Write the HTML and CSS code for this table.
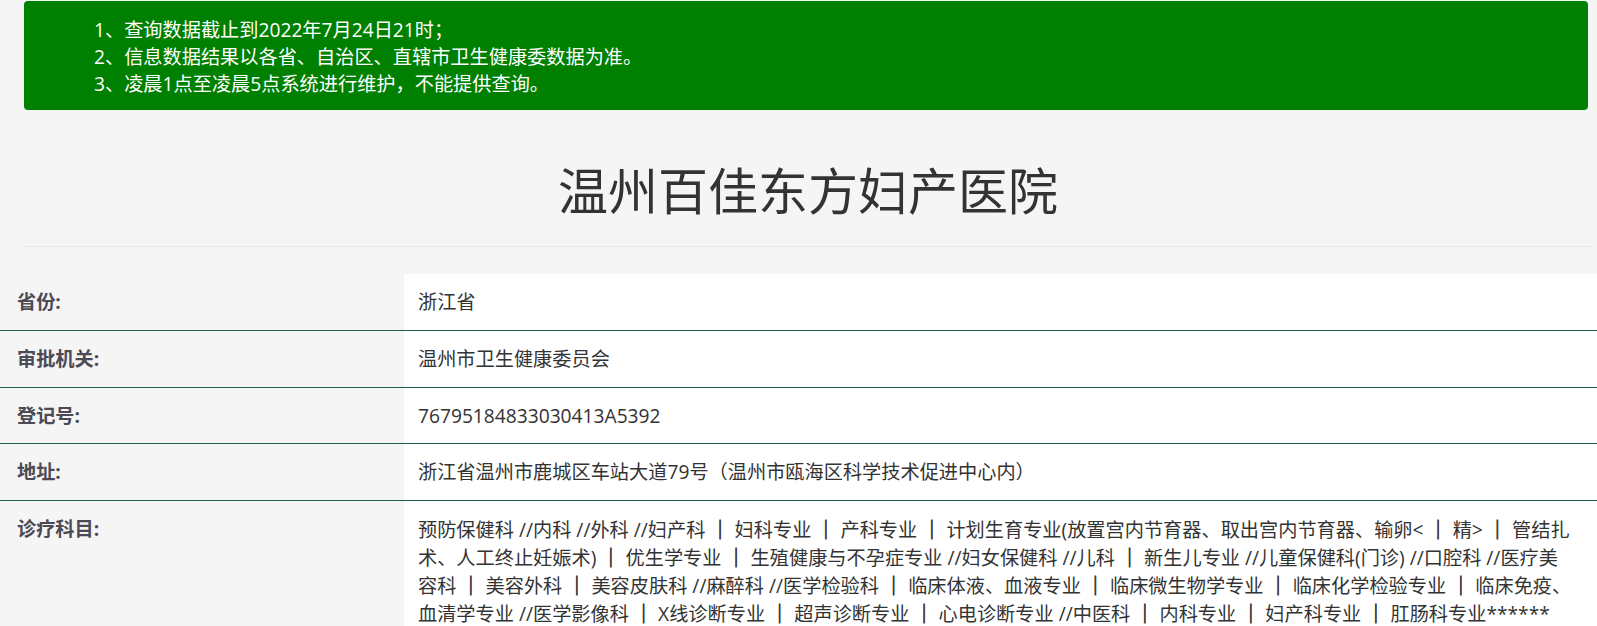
FILE: index.html
```html
<!DOCTYPE html>
<html lang="zh-CN">
<head>
<meta charset="utf-8">
<title>温州百佳东方妇产医院</title>
<link rel="stylesheet" href="styles.css">
</head>
<body>
<div class="top">
  <div class="notice">
    <p>1、查询数据截止到2022年7月24日21时；</p>
    <p>2、信息数据结果以各省、自治区、直辖市卫生健康委数据为准。</p>
    <p>3、凌晨1点至凌晨5点系统进行维护，不能提供查询。</p>
  </div>
  <h1 class="title">温州百佳东方妇产医院</h1>
</div>
<table class="info">
  <tr><th>省份:</th><td>浙江省</td></tr>
  <tr><th>审批机关:</th><td>温州市卫生健康委员会</td></tr>
  <tr><th>登记号:</th><td>76795184833030413A5392</td></tr>
  <tr><th>地址:</th><td>浙江省温州市鹿城区车站大道79号（温州市瓯海区科学技术促进中心内）</td></tr>
  <tr><th>诊疗科目:</th><td class="subjects">预防保健科 //内科 //外科 //妇产科 <span class="sep">｜</span> 妇科专业 <span class="sep">｜</span> 产科专业 <span class="sep">｜</span> 计划生育专业(放置宫内节育器、取出宫内节育器、输卵&lt; <span class="sep">｜</span> 精&gt; <span class="sep">｜</span> 管结扎<br>术、人工终止妊娠术) <span class="sep">｜</span> 优生学专业 <span class="sep">｜</span> 生殖健康与不孕症专业 //妇女保健科 //儿科 <span class="sep">｜</span> 新生儿专业 //儿童保健科(门诊) //口腔科 //医疗美<br>容科 <span class="sep">｜</span> 美容外科 <span class="sep">｜</span> 美容皮肤科 //麻醉科 //医学检验科 <span class="sep">｜</span> 临床体液、血液专业 <span class="sep">｜</span> 临床微生物学专业 <span class="sep">｜</span> 临床化学检验专业 <span class="sep">｜</span> 临床免疫、<br>血清学专业 //医学影像科 <span class="sep">｜</span> X线诊断专业 <span class="sep">｜</span> 超声诊断专业 <span class="sep">｜</span> 心电诊断专业 //中医科 <span class="sep">｜</span> 内科专业 <span class="sep">｜</span> 妇产科专业 <span class="sep">｜</span> 肛肠科专业******</td></tr>
</table>
</body>
</html>
```

FILE: styles.css
```css
body {
  margin: 0;
  background: #f5f5f5;
  font-family: "Open Sans", "Noto Sans CJK SC", sans-serif;
  color: #333;
}

.top {
  padding: 1px 5px 0 24px;
}

.notice {
  margin-right: 4px;
  background: #008000;
  border-radius: 4px;
  color: #fff;
  font-size: 19.2px;
  line-height: 27px;
  padding: 15px 15px 13px 70px;
}

.notice p {
  margin: 0;
}

.title {
  margin: 0;
  padding: 53px 0 27px;
  text-align: center;
  font-size: 50px;
  line-height: 56px;
  font-weight: 400;
  color: #333;
  border-bottom: 1px solid #e6e6e6;
}

.info {
  width: 100%;
  margin-top: 27px;
  border-collapse: collapse;
  table-layout: fixed;
  font-size: 19.2px;
  line-height: 26.8px;
}

.info tr {
  border-bottom: 1px solid #1f5e45;
}

.info th {
  box-sizing: border-box;
  width: 404px;
  padding: 15px 10px 14px 17px;
  text-align: left;
  vertical-align: top;
  font-weight: 700;
  color: #4b4a55;
  background: #f5f5f5;
}

.info td {
  padding: 15px 0 14px 14px;
  vertical-align: top;
  color: #333;
  background: #fff;
}

.subjects .sep {
  font-family: "Noto Sans CJK SC", sans-serif;
  font-weight: 700;
  color: #333;
  -webkit-text-stroke: 0.7px #333;
}
```
